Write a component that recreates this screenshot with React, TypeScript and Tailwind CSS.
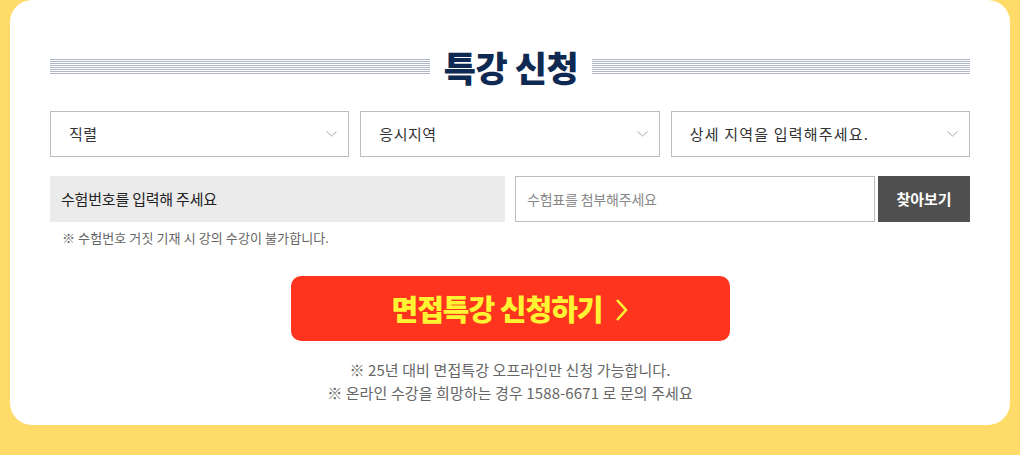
import React from "react";

const font = { fontFamily: '"Noto Sans CJK KR", "Noto Sans", sans-serif' };

function Chevron() {
  return (
    <svg width="11" height="6" viewBox="0 0 11 6" className="shrink-0">
      <path d="M0.5 0.5 L5.5 5 L10.5 0.5" fill="none" stroke="#a8a8a8" strokeWidth="1" />
    </svg>
  );
}

function Select({ label, wide }: { label: string; wide?: boolean }) {
  return (
    <div className="flex-1 h-[46px] border border-[#bdbdbd] bg-white flex items-center justify-between pl-[18px] pr-[11px]">
      <span className={`text-[15px] text-[#333] ${wide ? "tracking-[1.2px]" : "tracking-[0.5px]"}`}>{label}</span>
      <Chevron />
    </div>
  );
}

const stripe =
  "h-[15px] bg-[repeating-linear-gradient(to_bottom,#b1b5c8_0px,#b1b5c8_1px,transparent_1px,transparent_2px)]";

export default function App() {
  return (
    <div className="w-[1020px] h-[455px] bg-[#ffdb6a] px-[10px] overflow-hidden" style={font}>
      <div className="bg-white h-[425px] rounded-b-[22px] rounded-t-[22px] px-[40px] pt-[46px]">
        <div className="flex items-center h-[40px]">
          <div className={`w-[380px] ${stripe}`} />
          <div className="flex-1 text-center text-[35px] leading-none font-black text-[#0f2a52] tracking-[-0.5px]">
            특강 신청
          </div>
          <div className={`w-[378px] ${stripe}`} />
        </div>

        <div className="flex gap-[11px] mt-[25px]">
          <Select label="직렬" />
          <Select label="응시지역" />
          <Select label="상세 지역을 입력해주세요." wide />
        </div>

        <div className="flex mt-[19px] h-[46px]">
          <div className="w-[455px] bg-[#ebebeb] flex items-center pl-[11px] text-[15px] text-[#222] tracking-[-0.2px]">
            수험번호를 입력해 주세요
          </div>
          <div className="w-[360px] ml-[10px] border border-[#bdbdbd] flex items-center pl-[11px] text-[14px] text-[#888] tracking-[-0.2px]">
            수험표를 첨부해주세요
          </div>
          <div className="w-[92px] ml-[3px] bg-[#505050] flex items-center justify-center text-[15px] font-bold text-white tracking-[0px]">
            찾아보기
          </div>
        </div>

        <div className="mt-[7px] pl-[12px] text-[13px] leading-[18px] text-[#666] tracking-[0.1px]">
          ※ 수험번호 거짓 기재 시 강의 수강이 불가합니다.
        </div>

        <div className="flex justify-center mt-[29px]">
          <div className="w-[439px] h-[65px] rounded-[10px] bg-[#ff341f] flex items-center justify-center text-[29px] font-black text-[#fff433] tracking-[-1px]">
            면접특강 신청하기
            <svg width="14" height="24" viewBox="0 0 14 24" className="ml-[12px] mt-[2px]">
              <path d="M2 2 L11 12 L2 22" fill="none" stroke="#fff433" strokeWidth="2.6" />
            </svg>
          </div>
        </div>

        <div className="mt-[17px] text-center text-[15px] leading-[23px] text-[#666] tracking-[0.1px]">
          <div>※ 25년 대비 면접특강 오프라인만 신청 가능합니다.</div>
          <div>※ 온라인 수강을 희망하는 경우 1588-6671 로 문의 주세요</div>
        </div>
      </div>
    </div>
  );
}
